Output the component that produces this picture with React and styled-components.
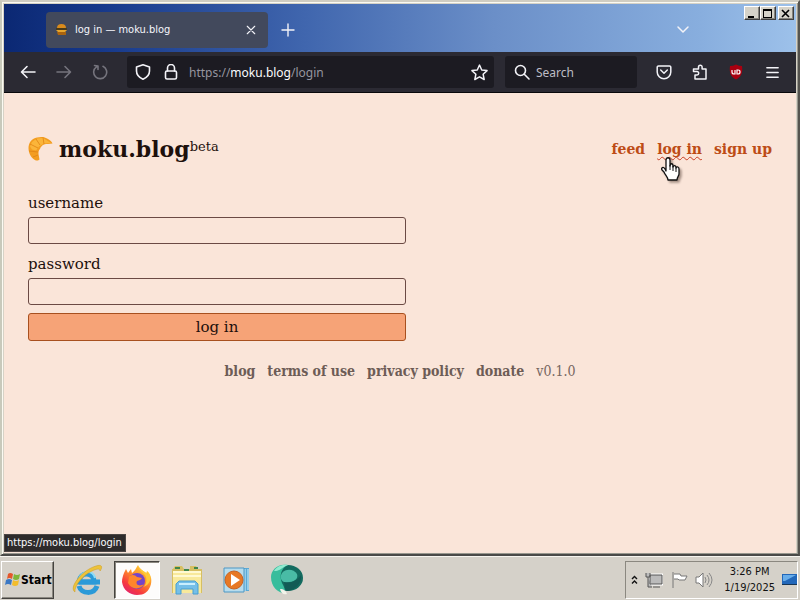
import React from "react";
import styled, { createGlobalStyle } from "styled-components";

const slab = `"DejaVu Serif", serif`;
const slabNarrow = `"DejaVu Serif Condensed", "DejaVu Serif", serif`;
const tahoma = `"DejaVu Sans Condensed", "DejaVu Sans", sans-serif`;
const chromeFont = `"Noto Sans", "Open Sans", sans-serif`;

const GlobalStyle = createGlobalStyle`
  * { box-sizing: border-box; }
  body { margin: 0; background: #d6d2ca; }
  button, input { font: inherit; color: inherit; }
  svg { display: block; flex: none; }
`;

const Desktop = styled.div`
  min-height: 100vh;
  display: flex;
  flex-direction: column;
  font-family: ${tahoma};
`;

const Window = styled.section`
  flex: 1;
  display: flex;
  flex-direction: column;
  position: relative;
  padding: 2px 2px 1px 2px;
  background: #d6d2c6;
  border: 2px solid;
  border-color: #d0cdc2 #55544f #4a4a48 #c8c9bb;
  box-shadow: inset 1px 1px #fbfaf2, inset -1px -1px #98978e;
`;

const TitleBar = styled.header`
  height: 48px;
  display: flex;
  align-items: flex-end;
  padding: 0 0 4px 42px;
  background: linear-gradient(90deg, #0b2873 0%, #16388a 12%, #4066ae 38%, #6b8fc8 62%, #88aede 88%, #9dc1ea 100%);
`;

const Tab = styled.div`
  width: 222px;
  height: 36px;
  display: flex;
  align-items: center;
  gap: 6px;
  padding: 0 8px;
  border-radius: 4px;
  background: #42495c;
  color: #f6f6fb;
  font-size: 11px;
  line-height: 16px;
`;

const TabTitle = styled.span`
  flex: 1;
  white-space: nowrap;
`;

const IconButton = styled.button`
  width: ${(p) => p.$w || 36}px;
  height: ${(p) => p.$h || 32}px;
  padding: 0;
  border: 0;
  background: none;
  color: ${(p) => p.$color || "#f3f3f8"};
  display: flex;
  align-items: center;
  justify-content: center;
  flex: none;
`;

const TitleSpace = styled.div`
  flex: 1;
  display: flex;
  justify-content: flex-end;
  padding-right: 43px;
`;

const WindowButtons = styled.div`
  align-self: flex-start;
  display: flex;
  padding: 2px 2px 0 0;
`;

const WindowButton = styled.button`
  width: 16px;
  height: 14px;
  padding: 0;
  margin-left: ${(p) => (p.$apart ? 2 : 0)}px;
  border: 1px solid;
  border-color: #fff #3f3f3f #3f3f3f #fff;
  box-shadow: inset -1px -1px #85837c;
  background: #d6d3c9;
  display: flex;
  align-items: center;
  justify-content: center;
`;

const Toolbar = styled.nav`
  height: 41px;
  display: flex;
  align-items: center;
  padding: 0 6px;
  background: #2b2a33;
  border-bottom: 1px solid #08080b;
  font-family: ${chromeFont};
  font-size: 12px;
  color: #b5b4bd;
`;

const AddressBar = styled.div`
  flex: 1;
  min-width: 0;
  height: 32px;
  display: flex;
  align-items: center;
  margin: 0 11px 0 9px;
  padding: 0 2px;
  border-radius: 3px;
  background: #1c1b22;
`;

const Address = styled.a`
  flex: 1;
  padding-left: 4px;
  color: #96959f;
  text-decoration: none;
  white-space: nowrap;
`;

const Domain = styled.span`
  color: #fbfbfe;
`;

const SearchBox = styled.label`
  width: 132px;
  height: 32px;
  display: flex;
  align-items: center;
  gap: 6px;
  padding: 0 9px;
  margin-right: 9px;
  border-radius: 3px;
  background: #1c1b22;
  color: #f3f3f8;
`;

const SearchInput = styled.input`
  width: 100%;
  min-width: 0;
  padding: 0;
  border: 0;
  outline: 0;
  background: none;
  &::placeholder { color: #bebdc5; opacity: 1; }
`;

const Page = styled.main`
  flex: 1;
  padding: 36px 24px 24px;
  background: #fae5d9;
  color: #1d100c;
  font-family: ${slab};
  font-size: 15px;
`;

const PageHeader = styled.header`
  min-height: 40px;
  display: flex;
  align-items: center;
  justify-content: space-between;
  margin-bottom: 22px;
`;

const Brand = styled.h1`
  display: flex;
  align-items: center;
  gap: 6px;
  margin: 0;
  font-size: 22px;
  line-height: 32px;
`;

const Beta = styled.sup`
  font-size: 13px;
  font-weight: 400;
  line-height: 16px;
  vertical-align: 6px;
`;

const Links = styled.nav`
  display: flex;
  gap: 12px;
`;

const NavLink = styled.a`
  color: #bd4c16;
  font-size: 14px;
  font-weight: 700;
  line-height: 24px;
  text-decoration: ${(p) => (p.$active ? "underline wavy #c83c24 1px" : "none")};
  text-underline-offset: 2px;
  text-decoration-skip-ink: none;
`;

const LoginForm = styled.form`
  max-width: 378px;
  display: flex;
  flex-direction: column;
`;

const Label = styled.label`
  line-height: 24px;
  padding-bottom: 2px;
`;

const Field = styled.input`
  height: 27px;
  margin-bottom: 8px;
  padding: 2px 6px;
  border: 1px solid #6b4a44;
  border-radius: 3px;
  background: transparent;
`;

const Submit = styled.button`
  height: 28px;
  padding: 0;
  border: 1px solid #a8501f;
  border-radius: 3px;
  background: #f6a377;
  line-height: 24px;
`;

const Footer = styled.footer`
  display: flex;
  justify-content: center;
  gap: 12px;
  margin-top: 20px;
  font-family: ${slabNarrow};
  font-size: 14px;
  line-height: 20px;
  color: #76665f;
`;

const FooterLink = styled.a`
  color: #6d5c56;
  font-weight: 700;
  text-decoration: none;
`;

const StatusTip = styled.div`
  position: absolute;
  left: 2px;
  bottom: 2px;
  padding: 0 3px 0 2px;
  border: 1px solid #4b4644;
  background: #2e2b2b;
  color: #fbfbfe;
  font-size: 11px;
  line-height: 16px;
`;

const Pointer = styled.svg`
  position: absolute;
  left: 658px;
  top: 154px;
  filter: drop-shadow(2px 2px 1px rgba(60, 40, 30, 0.45));
`;

const Taskbar = styled.footer`
  height: 44px;
  display: flex;
  align-items: center;
  padding: 2px 2px 0 1px;
  background: #d5d1c9;
  border-top: 1px solid #f7f5ef;
`;

const StartButton = styled.button`
  width: 53px;
  height: 38px;
  display: flex;
  align-items: center;
  gap: 0;
  padding: 0 2px;
  margin-right: 10px;
  border: 1px solid;
  border-color: #fff #45433f #45433f #fff;
  box-shadow: inset -1px -1px #8b8880;
  background: #d5d1c9;
  color: #000;
  font-size: 12px;
  font-weight: 700;
`;

const AppButton = styled.button`
  width: 46px;
  height: 38px;
  margin-right: 4px;
  padding: 0;
  display: flex;
  align-items: center;
  justify-content: center;
  border: ${(p) => (p.$active ? "1px solid" : "0")};
  border-color: #45433f #fff #fff #45433f;
  box-shadow: ${(p) => (p.$active ? "inset 1px 1px #8b8880" : "none")};
  background: ${(p) => (p.$active ? "#fdfcfb" : "none")};
`;

const Tray = styled.div`
  height: 38px;
  margin-left: auto;
  display: flex;
  align-items: center;
  gap: 7px;
  padding-left: 5px;
  border: 1px solid;
  border-color: #8b8880 #fff #fff #8b8880;
`;

const Clock = styled.time`
  padding: 0 0 0 4px;
  font-size: 11px;
  line-height: 16px;
  text-align: center;
  color: #111;
`;

const Line = ({ size = 16, w = 1.6, children }) => (
  <svg width={size} height={size} viewBox="0 0 16 16" fill="none" stroke="currentColor" strokeWidth={w} strokeLinecap="round" strokeLinejoin="round" aria-hidden="true">
    {children}
  </svg>
);

const Burger = () => (
  <svg width="15" height="14" viewBox="0 0 15 14" aria-hidden="true">
    <path d="M3 5Q3 1 7.500 1T12 5Z" fill="#d98b1c" />
    <path d="M2 5h11v2H2z" fill="#4a3b1a" />
    <path d="M2 7h11l-2 2H4z" fill="#e7a52b" />
    <path d="M3 9h9v3H4z" fill="#a9630f" />
  </svg>
);

const Croissant = () => (
  <svg width="25" height="26" viewBox="0 0 25 26" aria-hidden="true">
    <path d="M8 24.500C4 23 .5 18 .5 12 .5 7 4 2 9 1.500c4-1 8-.7 11 1.500 2 1 4 3 4.500 4.500-3 .5-6 .3-8.500 1-2 1-3.500 2.500-4 4.500-1.500 1-1.500 3-1.500 5l1 5.500-1.500 1Z" fill="#f39d20" />
    <path d="M4 6 9 2.500l6-.5 8 5-7 .5-5 3-3 4-4-1-2-3Z" fill="#fbb53a" />
    <path d="m8 3 4 6M15 1.500l1 6.500M2 8l8 4M1 15l9 1M5 21l5-2" stroke="#df8314" strokeWidth=".8" fill="none" />
  </svg>
);

const StartFlag = () => (
  <svg width="17" height="17" viewBox="0 0 17 17" aria-hidden="true">
    <path d="M4 3q2-2 5 0L8 8Q5 6 3 8Z" fill="#e4572b" />
    <path d="M10 3q3 2 6 0l-1 5q-3 2-6 0Z" fill="#7fb539" />
    <path d="M2 9q3-2 6 0l-1 5q-3-2-6 0Z" fill="#3b78c4" />
    <path d="M9 9q3 2 6 0l-1 5q-3 2-6 0Z" fill="#f3bd2c" />
  </svg>
);

const Explorer = () => (
  <svg width="32" height="32" viewBox="0 0 32 32" aria-hidden="true">
    <path d="M8 18h15c0-10-14-11-15 0Zm18 4c-3 9-16 8-18 0" fill="none" stroke="#2b9ad8" strokeWidth="5" />
    <path d="M8 18h21" stroke="#2b9ad8" strokeWidth="5" />
    <path d="M8 15c3-9 14-9 16-1" fill="none" stroke="#8cdcf8" strokeWidth="2" />
    <path d="M4 28C-3 24 11 6 25 2c6-2 7 1 4 5 0-3-4-2-8 0C12 11 3 22 4 28Z" fill="#edc23a" stroke="#c89b20" strokeWidth=".5" />
  </svg>
);

const Fox = () => (
  <svg width="32" height="32" viewBox="0 0 32 32" aria-hidden="true">
    <defs>
      <linearGradient id="fire" x1=".85" y1="0" x2=".2" y2="1">
        <stop offset="0" stopColor="#ffdd3b" />
        <stop offset=".4" stopColor="#ff9228" />
        <stop offset=".75" stopColor="#f6393f" />
        <stop offset="1" stopColor="#df2272" />
      </linearGradient>
    </defs>
    <path d="M3 9 5 5l2 4 3-4 1 4c3-2 4-5 6-8 2 5 7 6 8 9l1-3c4 4 5 8 4 13-2 8-7 11-14 11S2 26 1 18c0-4 1-6 2-9Z" fill="url(#fire)" />
    <circle cx="16" cy="17" r="8" fill="#7445c8" />
    <path d="M8 13c3-3 6-2 8 0l5 1c-1 2-3 2-5 3-2 4 3 6 7 3-3 6-13 6-16-1Z" fill="#ff862b" />
    <path d="M17 2c1 6 6 6 8 11 1 4 0 8-3 10 7-2 9-9 6-14l-2-2 1 4c-2-4-8-4-10-9Z" fill="#ffca36" />
  </svg>
);

const Folder = () => (
  <svg width="34" height="32" viewBox="0 0 34 32" aria-hidden="true">
    <path d="M3 5 5 2h7l2 3h6V2h6l2 3h4v24H2V5Z" fill="#d7bf62" />
    <path d="M3 7h28v22H3Z" fill="#f8e99b" />
    <path d="M3 8h28M3 12h28" stroke="#fff9d2" strokeWidth="2" />
    <path d="M5 4h5M14 6h5M24 4h4" stroke="#40864b" strokeWidth="2" />
    <path d="M6 30V20l3-3h16l3 3v10h-5v-5H11v5Z" fill="#75bfe8" stroke="#489fd0" />
    <path d="M9 20h16" stroke="#c9efff" strokeWidth="2" />
  </svg>
);

const MediaPlayer = () => (
  <svg width="30" height="28" viewBox="0 0 30 28" aria-hidden="true">
    <path d="M7 2h20v23H7Z" fill="#5ba9d5" />
    <path d="M23 3v22M26 3v21" stroke="#d3f1fb" />
    <path d="M2 2h20v24H2Z" fill="#b8dcec" stroke="#4d97c4" />
    <circle cx="12" cy="14" r="9" fill="#e77824" stroke="#c76323" />
    <path d="m9 8 9 6-9 6Z" fill="#fff" />
  </svg>
);

const Orb = () => (
  <svg width="34" height="34" viewBox="0 0 34 34" aria-hidden="true">
    <ellipse cx="18" cy="15" rx="15" ry="13" fill="#136b5f" />
    <path d="M18 2C8 0 1 7 1 14c0 10 7 15 12 16 4-1 1-6-1-10C9 13 11 5 18 2Z" fill="#38bd9c" />
    <path d="M12 10c4-5 12-4 15 1 2 6-5 9-13 8-4-2-4-6-2-9Z" fill="#49bba5" />
    <path d="M4 8c3-5 9-7 14-6-5 2-9 6-12 6Z" fill="#90ead0" />
    <path d="M14 19c6 2 13-1 17-7 1 8-5 15-14 16-3-2-2-5-3-9Z" fill="#125b55" />
    <path d="M10 26c4 0 6 2 7 5-4 1-6-1-7-5Z" fill="#f3f3ea" />
  </svg>
);

const Hand = () => (
  <Pointer width="20" height="25" viewBox="0 0 20 25" aria-hidden="true">
    <path d="M6 15V4c0-3 4-3 4 0v6c0-3 3-3 3 0v1c1-2 3-2 3 1 1-2 3-1 3 1v5c0 2-2 3-2 6H8c0-3-3-5-4-8l-2-2c-1-2 1-4 3-1Z" fill="#fff" stroke="#111" strokeWidth="1.300" strokeLinejoin="round" />
    <path d="M10 9v5M13 10v5M16 12v4" stroke="#111" fill="none" />
  </Pointer>
);

export default function App() {
  return (
    <Desktop>
      <GlobalStyle />
      <Window>
        <TitleBar>
          <Tab>
            <Burger />
            <TabTitle>log in — moku.blog</TabTitle>
            <IconButton $w={18} $h={18} aria-label="Close tab">
              <Line size={12} w={1.500}><path d="m3 3 10 10M13 3 3 13" /></Line>
            </IconButton>
          </Tab>
          <IconButton $w={40} $h={36} aria-label="New tab">
            <Line w={1.400}><path d="M8 2v12M2 8h12" /></Line>
          </IconButton>
          <TitleSpace>
            <IconButton $h={36} aria-label="List all tabs">
              <Line w={1.500}><path d="m3 5 5 5 5-5" /></Line>
            </IconButton>
          </TitleSpace>
          <WindowButtons>
            <WindowButton aria-label="Minimize">
              <svg width="10" height="9" viewBox="0 0 10 9"><path d="M1 7h6v2H1z" /></svg>
            </WindowButton>
            <WindowButton aria-label="Maximize">
              <svg width="10" height="9" viewBox="0 0 10 9"><path d="M0 0h9v9H0Zm1 2v6h7V2Z" fillRule="evenodd" /></svg>
            </WindowButton>
            <WindowButton $apart aria-label="Close">
              <svg width="10" height="9" viewBox="0 0 10 9"><path d="m1 1 7 7m0-7L1 8" stroke="#000" strokeWidth="1.600" /></svg>
            </WindowButton>
          </WindowButtons>
        </TitleBar>
        <Toolbar>
          <IconButton aria-label="Back"><Line><path d="M15 8H2m5-5.500L1.500 8 7 13.500" /></Line></IconButton>
          <IconButton $color="#75747d" aria-label="Forward"><Line><path d="M1 8h13M9 2.500 14.500 8 9 13.500" /></Line></IconButton>
          <IconButton $color="#75747d" aria-label="Reload"><Line><path d="M11 2.300A6.500 6.500 0 1 1 4.500 2.800M2.500 1.500 6 2v3.500" /></Line></IconButton>
          <AddressBar>
            <IconButton $w={28} aria-label="Tracking protection"><Line><path d="M8 .8 14.500 3v4c0 4-2.500 6.500-6.500 8.200C4 13.500 1.500 11 1.500 7V3Z" /></Line></IconButton>
            <IconButton $w={28} aria-label="Site security"><Line><rect x="2.500" y="7" width="11" height="8" rx="1.500" /><path d="M4.500 7V4a3.500 3.500 0 0 1 7 0v3" /></Line></IconButton>
            <Address href="https://moku.blog/login">https://<Domain>moku.blog</Domain>/login</Address>
            <IconButton $w={26} aria-label="Bookmark this page"><Line size={17} w={1.400}><path d="m8 1 2.100 4.600 5 .6-3.700 3.400 1 5L8 12.100l-4.400 2.500 1-5L.9 6.200l5-.6Z" /></Line></IconButton>
          </AddressBar>
          <SearchBox>
            <Line><circle cx="6.500" cy="6.500" r="5" /><path d="m10.300 10.300 4.700 4.700" /></Line>
            <SearchInput type="search" placeholder="Search" aria-label="Search" />
          </SearchBox>
          <IconButton aria-label="Save to Pocket"><Line w={1.500}><path d="M2.500 2h11a1.300 1.300 0 0 1 1.300 1.300V8A6.800 6.800 0 0 1 1.200 8V3.300A1.300 1.300 0 0 1 2.500 2ZM4.700 6 8 9.200 11.300 6" /></Line></IconButton>
          <IconButton aria-label="Extensions"><Line w={1.500}><path d="M3 15v-4h2a1.700 1.700 0 0 0 0-3.400H1.500V5h5V3a1.800 1.800 0 0 1 3.600 0v2H14v10Z" /></Line></IconButton>
          <IconButton aria-label="uBlock">
            <svg width="16" height="16" viewBox="0 0 16 16">
              <path d="M8 .5c2 1 4 1.500 6 1.500 1 7-1 11-6 13.500C3 13 1 9 2 2c2 0 4-.5 6-1.500Z" fill="#a90010" />
              <path d="M4 6v2q0 2 2 2h1V6M9 6v4h1q2 0 2-2T10 6Z" fill="none" stroke="#fff" strokeWidth="1.200" />
            </svg>
          </IconButton>
          <IconButton aria-label="Menu"><Line size={15}><path d="M2 3h12M2 8h12M2 13h12" /></Line></IconButton>
        </Toolbar>
        <Page>
          <PageHeader>
            <Brand><Croissant /><span>moku.blog<Beta>beta</Beta></span></Brand>
            <Links>
              <NavLink href="#feed">feed</NavLink>
              <NavLink href="#login" $active>log in</NavLink>
              <NavLink href="#signup">sign up</NavLink>
            </Links>
          </PageHeader>
          <LoginForm>
            <Label htmlFor="username">username</Label>
            <Field id="username" />
            <Label htmlFor="password">password</Label>
            <Field id="password" type="password" />
            <Submit type="button">log in</Submit>
          </LoginForm>
          <Footer>
            <FooterLink href="#blog">blog</FooterLink>
            <FooterLink href="#terms">terms of use</FooterLink>
            <FooterLink href="#privacy">privacy policy</FooterLink>
            <FooterLink href="#donate">donate</FooterLink>
            <span>v0.1.0</span>
          </Footer>
        </Page>
        <StatusTip>https://moku.blog/login</StatusTip>
        <Hand />
      </Window>
      <Taskbar>
        <StartButton><StartFlag />Start</StartButton>
        <AppButton aria-label="Internet Explorer"><Explorer /></AppButton>
        <AppButton $active aria-label="Firefox"><Fox /></AppButton>
        <AppButton aria-label="File Explorer"><Folder /></AppButton>
        <AppButton aria-label="Media Player"><MediaPlayer /></AppButton>
        <AppButton aria-label="Globe"><Orb /></AppButton>
        <Tray>
          <svg width="7" height="10" viewBox="0 0 7 10"><path d="m1 4 2.500-2.500L6 4M1 8.500 3.500 6 6 8.500" fill="none" stroke="#111" strokeWidth="1.400" /></svg>
          <svg width="18" height="18" viewBox="0 0 18 18"><path d="M5 4h12v9H5Z" fill="#aaa" stroke="#fff" strokeWidth="3" /><path d="M5 4h12v9H5ZM8 16h7M1 2v4h4V2M3 6v10h4" fill="#bbb" stroke="#555" /></svg>
          <svg width="18" height="18" viewBox="0 0 18 18"><path d="M3 1v16M4 3h6l1 2h6l-2 4H9L8 8H4" fill="#fff" stroke="#777" /></svg>
          <svg width="18" height="18" viewBox="0 0 18 18"><path d="M1 6h3l4-4v14l-4-4H1Z" fill="#fff" stroke="#777" /><path d="M10 6q2 3 0 6M12 4q4 5 0 10M14 2q6 7 0 14" fill="none" stroke="#888" /></svg>
          <Clock>3:26 PM<br />1/19/2025</Clock>
          <svg width="15" height="14" viewBox="0 0 15 14"><path d="M0 1h15v10H0Z" fill="#2267b9" /><path d="M1 2h13L3 8H1Z" fill="#68adea" /><path d="M0 11h15v1H0Z" fill="#173554" /></svg>
        </Tray>
      </Taskbar>
    </Desktop>
  );
}
